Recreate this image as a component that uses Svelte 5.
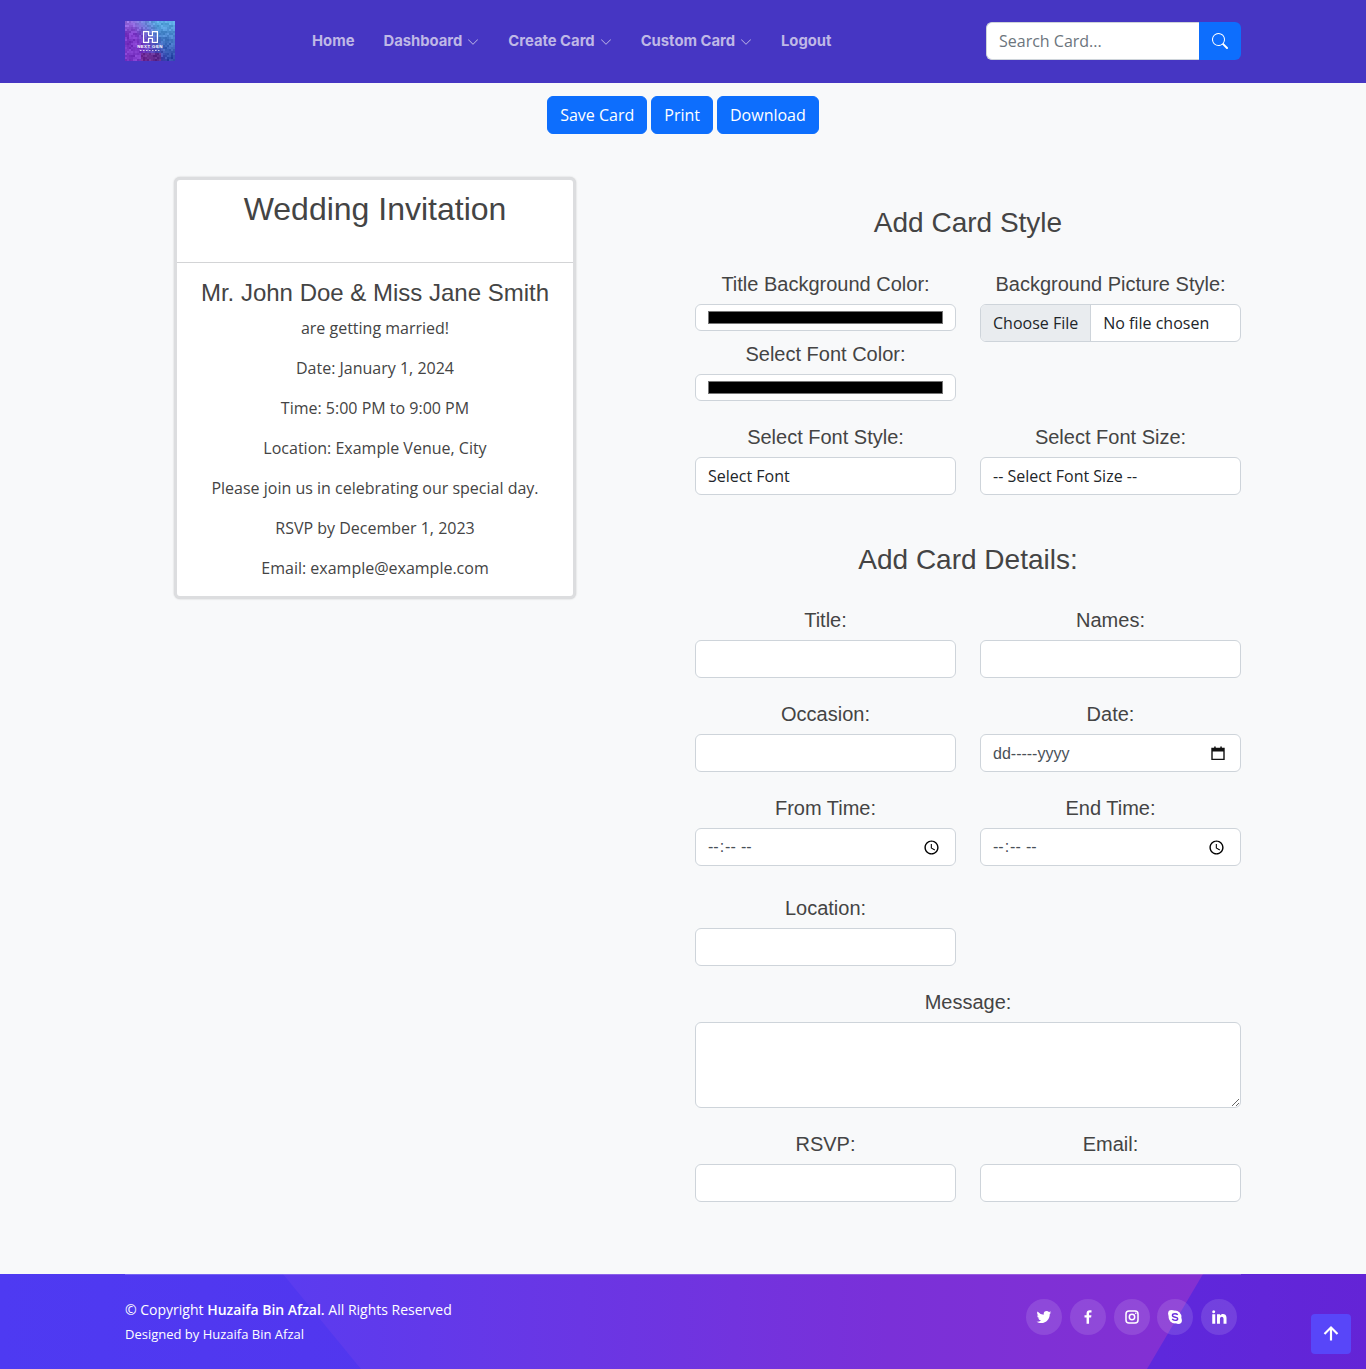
<script>
  const navLinks = [
    { label: 'Home', drop: false },
    { label: 'Dashboard', drop: true },
    { label: 'Create Card', drop: true },
    { label: 'Custom Card', drop: true },
    { label: 'Logout', drop: false }
  ];

  const cardLines = [
    'are getting married!',
    'Date: January 1, 2024',
    'Time: 5:00 PM to 9:00 PM',
    'Location: Example Venue, City',
    'Please join us in celebrating our special day.',
    'RSVP by December 1, 2023',
    'Email: example@example.com'
  ];

  // the logo is a low-res photo in the reference, so build it from 2px cells
  function mix(a, b, t) {
    return a.map((v, i) => v + (b[i] - v) * t);
  }

  function logoColor(x, y) {
    const u = x / 24;
    const v = y / 19;
    const left = mix([150, 110, 225], [125, 55, 200], Math.min(v * 3, 1));
    const right = mix([90, 170, 225], [45, 70, 170], v);
    const edge = u * 1.9 - 0.45 + (0.5 - v) * 0.5;
    let c = mix(left, right, Math.min(1, Math.max(0, edge)));
    if (v > 0.82 && u > 0.3 && u < 0.72) c = mix(c, [105, 35, 125], 0.65);
    const hash = Math.abs(Math.sin(x * 12.9898 + y * 78.233) * 43758.5453) % 1;
    const noise = (hash - 0.5) * 36;
    return `rgb(${c.map((n) => Math.round(n + noise)).join(',')})`;
  }

  const logoCells = [];
  for (let y = 0; y < 20; y++) {
    for (let x = 0; x < 25; x++) {
      logoCells.push({ x: x * 2, y: y * 2, fill: logoColor(x, y) });
    }
  }
</script>

<header class="topbar">
  <div class="container bar">
    <svg class="logo" width="50" height="40" viewBox="0 0 50 40">
      {#each logoCells as c}
        <rect x={c.x} y={c.y} width="2" height="2" fill={c.fill} />
      {/each}
      <path d="M18.600 10.600h5v4h3.800v-4h5v10.800h-5v-4h-3.800v4h-5z" fill="none" stroke="#fff" stroke-width="1.200" />
      <text x="25" y="27" class="logo-text">NEXT GEN</text>
      <path d="M15 29.500h20" stroke="#fff" stroke-opacity="0.7" stroke-dasharray="1.500 1.500" />
    </svg>

    <nav class="links">
      {#each navLinks as link}
        <span class="link">
          {link.label}
          {#if link.drop}
            <svg width="12" height="12" viewBox="0 0 16 16" fill="currentColor">
              <path d="M1.646 4.646a.5.5 0 0 1 .708 0L8 10.293l5.646-5.647a.5.5 0 0 1 .708.708l-6 6a.5.5 0 0 1-.708 0l-6-6a.5.5 0 0 1 0-.708z" />
            </svg>
          {/if}
        </span>
      {/each}
    </nav>

    <form class="search">
      <input type="text" placeholder="Search Card..." />
      <button type="button" aria-label="Search">
        <svg width="16" height="16" viewBox="0 0 16 16" fill="currentColor">
          <path d="M11.742 10.344a6.5 6.5 0 1 0-1.397 1.398h-.001c.03.04.062.078.098.115l3.85 3.85a1 1 0 0 0 1.415-1.414l-3.85-3.85a1.007 1.007 0 0 0-.115-.1zM12 6.5a5.5 5.5 0 1 1-11 0 5.5 5.5 0 0 1 11 0z" />
        </svg>
      </button>
    </form>
  </div>
</header>

<div class="actions">
  <button class="btn">Save Card</button>
  <button class="btn">Print</button>
  <button class="btn">Download</button>
</div>

<main class="container content">
  <section class="invite">
    <div class="invite-head">
      <h2>Wedding Invitation</h2>
    </div>
    <div class="invite-body">
      <h4>Mr. John Doe &amp; Miss Jane Smith</h4>
      {#each cardLines as line}
        <p>{line}</p>
      {/each}
    </div>
  </section>

  <section class="editor">
    <h3 class="style-title">Add Card Style</h3>
    <div class="grid">
      <div>
        <div class="field tight">
          <label for="bgc">Title Background Color:</label>
          <input id="bgc" class="control color" type="color" value="#000000" />
        </div>
        <div class="field">
          <label for="fc">Select Font Color:</label>
          <input id="fc" class="control color" type="color" value="#000000" />
        </div>
      </div>
      <div class="field">
        <label for="pic">Background Picture Style:</label>
        <input id="pic" class="control file" type="file" />
      </div>
      <div class="field">
        <label for="ff">Select Font Style:</label>
        <select id="ff" class="control"><option>Select Font</option></select>
      </div>
      <div class="field">
        <label for="fs">Select Font Size:</label>
        <select id="fs" class="control"><option>-- Select Font Size --</option></select>
      </div>
    </div>

    <h3 class="details-title">Add Card Details:</h3>
    <div class="grid">
      <div class="field">
        <label for="title">Title:</label>
        <input id="title" class="control" type="text" />
      </div>
      <div class="field">
        <label for="names">Names:</label>
        <input id="names" class="control" type="text" />
      </div>
      <div class="field">
        <label for="occ">Occasion:</label>
        <input id="occ" class="control" type="text" />
      </div>
      <div class="field">
        <label for="date">Date:</label>
        <div class="with-icon">
          <input id="date" class="control date" type="text" value="dd-----yyyy" />
          <svg class="picker" width="14" height="14" viewBox="0 0 14 14">
            <path d="M1 2.500h12v11H1z" fill="none" stroke="#111" stroke-width="1.400" />
            <path d="M1 2h12v3.400H1zM3.200.6h1.500V3H3.200zM9.300.6h1.500V3H9.300z" fill="#111" />
          </svg>
        </div>
      </div>
      <div class="field">
        <label for="from">From Time:</label>
        <input id="from" class="control time" type="time" />
      </div>
      <div class="field">
        <label for="end">End Time:</label>
        <input id="end" class="control time" type="time" />
      </div>
      <div class="field location">
        <label for="loc">Location:</label>
        <input id="loc" class="control" type="text" />
      </div>
      <div class="field wide">
        <label for="msg">Message:</label>
        <textarea id="msg" class="control"></textarea>
      </div>
      <div class="field">
        <label for="rsvp">RSVP:</label>
        <input id="rsvp" class="control" type="text" />
      </div>
      <div class="field">
        <label for="email">Email:</label>
        <input id="email" class="control" type="text" />
      </div>
    </div>
  </section>
</main>

<footer class="footer">
  <div class="band"></div>
  <div class="container foot-row">
    <div class="credits">
      <div class="copy">© Copyright <strong>Huzaifa Bin Afzal.</strong> All Rights Reserved</div>
      <div class="made">Designed by Huzaifa Bin Afzal</div>
    </div>
    <div class="socials">
      <span class="social">
        <svg width="18" height="18" viewBox="0 0 24 24" fill="#fff"><path d="M19.633 7.997c.013.175.013.349.013.523 0 5.325-4.053 11.461-11.46 11.461-2.282 0-4.402-.661-6.186-1.809.324.037.636.05.973.05a8.07 8.07 0 0 0 5.001-1.721 4.036 4.036 0 0 1-3.767-2.793c.249.037.499.062.761.062.361 0 .724-.05 1.061-.137a4.027 4.027 0 0 1-3.23-3.953v-.05c.537.299 1.16.486 1.82.511a4.022 4.022 0 0 1-1.796-3.354c0-.748.199-1.434.548-2.032a11.457 11.457 0 0 0 8.306 4.215c-.062-.3-.1-.611-.1-.923a4.026 4.026 0 0 1 4.028-4.028c1.16 0 2.207.486 2.943 1.272a7.957 7.957 0 0 0 2.556-.973 4.02 4.02 0 0 1-1.771 2.22 8.073 8.073 0 0 0 2.319-.624 8.645 8.645 0 0 1-2.019 2.083z" /></svg>
      </span>
      <span class="social">
        <svg width="18" height="18" viewBox="0 0 24 24" fill="#fff"><path d="M13.397 20.997v-8.196h2.765l.411-3.209h-3.176V7.548c0-.926.258-1.56 1.587-1.56h1.684V3.127A22.336 22.336 0 0 0 14.201 3c-2.444 0-4.122 1.492-4.122 4.231v2.355H7.332v3.209h2.753v8.202h3.312z" /></svg>
      </span>
      <span class="social">
        <svg width="18" height="18" viewBox="0 0 24 24" fill="none" stroke="#fff" stroke-width="2">
          <rect x="4" y="4" width="16" height="16" rx="4" />
          <circle cx="12" cy="12" r="3.600" />
          <circle cx="17" cy="7" r="1.100" fill="#fff" stroke="none" />
        </svg>
      </span>
      <span class="social">
        <svg width="18" height="18" viewBox="0 0 24 24">
          <circle cx="12" cy="12" r="8.600" fill="#fff" />
          <circle cx="7.400" cy="7.400" r="4.600" fill="#fff" />
          <circle cx="16.600" cy="16.600" r="4.600" fill="#fff" />
          <path d="M15.600 9.200c-.7-1-2-1.500-3.600-1.500-2 0-3.400 1-3.400 2.300 0 3.200 7 1.600 7 4.300 0 1.300-1.500 2.200-3.500 2.200-1.800 0-3.100-.7-3.800-1.900" fill="none" stroke="#6a2fdc" stroke-width="1.900" />
        </svg>
      </span>
      <span class="social">
        <svg width="18" height="18" viewBox="0 0 24 24" fill="#fff"><path d="M6.94 5a2 2 0 1 1-4-.002 2 2 0 0 1 4 .002zM7 8.48H3V21h4V8.48zm6.32 0H9.34V21h3.940v-6.57c0-3.660 4.770-4 4.770 0V21H22v-7.930c0-6.170-7.060-5.940-8.720-2.910l.04-1.680z" /></svg>
      </span>
    </div>
  </div>
  <button class="to-top" aria-label="Back to top">
    <svg width="26" height="26" viewBox="0 0 24 24" fill="#fff"><path d="M11 8.414V18h2V8.414l4.293 4.293 1.414-1.414L12 4.586l-6.707 6.707 1.414 1.414z" /></svg>
  </button>
</footer>

<style>
  :global(body) {
    margin: 0;
    background: #f8f9fa;
    color: #444;
    font-family: 'Open Sans', sans-serif;
    font-size: 16px;
    line-height: 1.5;
  }

  .container {
    width: 1116px;
    margin: 0 auto;
  }

  .topbar {
    height: 83px;
    background: #4636c3;
  }

  .bar {
    display: flex;
    align-items: center;
    height: 82px;
  }

  .logo {
    display: block;
    flex: none;
  }

  .logo-text {
    font-family: 'Liberation Sans', sans-serif;
    font-size: 4.400px;
    font-weight: 700;
    letter-spacing: 0.4px;
    fill: #fff;
    text-anchor: middle;
  }

  .links {
    display: flex;
    gap: 29px;
    margin-left: 137px;
    padding-top: 1px;
    flex: 1;
  }

  .link {
    display: flex;
    align-items: center;
    gap: 5px;
    color: #bfb8e6;
    font-family: Inter, sans-serif;
    font-size: 14.800px;
    font-weight: 700;
  }

  .search {
    display: flex;
    width: 255px;
    height: 38px;
  }

  .search input {
    flex: 1;
    min-width: 0;
    box-sizing: border-box;
    border: 1px solid #ced4da;
    border-right: 0;
    border-radius: 6px 0 0 6px;
    padding: 6px 12px;
    font: inherit;
    outline: none;
  }

  .search input::placeholder {
    color: #6c757d;
  }

  .search button {
    display: flex;
    align-items: center;
    justify-content: center;
    width: 42px;
    border: 0;
    padding: 0;
    border-radius: 0 6px 6px 0;
    background: #0d6efd;
    color: #fff;
  }

  .actions {
    display: flex;
    justify-content: center;
    gap: 4px;
    padding-top: 13px;
  }

  .btn {
    height: 38px;
    padding: 6px 12px;
    border: 1px solid #0d6efd;
    border-radius: 6px;
    background: #0d6efd;
    color: #fff;
    font: inherit;
  }

  .content {
    display: flex;
    align-items: flex-start;
    padding-top: 43px;
    height: 1140px;
    box-sizing: border-box;
  }

  .invite {
    width: 402px;
    box-sizing: border-box;
    margin-left: 49px;
    border: 3px solid #dcdddf;
    border-radius: 6px;
    background: #fff;
    box-shadow: 0 0 2px rgba(0, 0, 0, 0.2);
    text-align: center;
  }

  .invite-head {
    box-sizing: border-box;
    height: 83px;
    border-bottom: 1px solid #d3d4d6;
    padding: 10px 16px 0;
  }

  h2, h3, h4 {
    margin: 0;
    font-family: 'Liberation Sans', sans-serif;
    font-weight: 400;
    line-height: 1.2;
    color: #444;
  }

  h2 {
    font-size: 32px;
  }

  .invite-body {
    padding: 16px 16px 0;
  }

  h4 {
    font-size: 24px;
    margin-bottom: 8px;
    white-space: nowrap;
  }

  .invite-body p {
    margin: 0 0 16px;
  }

  .editor {
    width: 546px;
    margin-left: 119px;
  }

  h3 {
    font-size: 28px;
    text-align: center;
  }

  .style-title {
    margin-top: 29px;
    margin-bottom: 29px;
  }

  .details-title {
    margin-top: 27px;
    margin-bottom: 29px;
  }

  .grid {
    display: grid;
    grid-template-columns: 261px 261px;
    column-gap: 24px;
    align-items: start;
  }

  .field {
    margin-bottom: 21px;
    text-align: center;
  }

  .field.tight {
    margin-bottom: 8px;
  }

  .field.location {
    margin-top: 6px;
    grid-column: 1;
  }

  .field.wide {
    grid-column: 1 / 3;
  }

  .field.wide + .field {
    grid-column: 1;
  }

  label {
    display: block;
    height: 30px;
    margin-bottom: 5px;
    font-family: 'Liberation Sans', sans-serif;
    font-size: 20px;
    line-height: 30px;
    color: #444;
  }

  .control {
    display: block;
    width: 100%;
    height: 38px;
    box-sizing: border-box;
    margin: 0;
    padding: 6px 12px;
    border: 1px solid #ced4da;
    border-radius: 6px;
    background: #fff;
    color: #212529;
    font-family: 'Open Sans', sans-serif;
    font-size: 16px;
    line-height: 1.5;
    outline: none;
    appearance: none;
  }

  textarea.control {
    height: 86px;
    resize: vertical;
    appearance: auto;
  }

  .color {
    height: 27px;
    padding: 6px 12px;
  }

  .color::-webkit-color-swatch-wrapper {
    padding: 0;
  }

  .color::-webkit-color-swatch {
    border: 1px solid #767676;
    border-radius: 0;
  }

  .file {
    overflow: hidden;
  }

  .file::file-selector-button {
    height: 38px;
    margin: -7px 12.500px -5px -12px;
    padding: 6px 11.500px 6px 12px;
    border: 0;
    border-right: 1px solid #ced4da;
    border-radius: 0;
    background: #e9ecef;
    color: #212529;
    font: inherit;
  }

  .with-icon {
    position: relative;
  }

  .date {
    padding-top: 7px;
    padding-bottom: 5px;
    font-family: 'Liberation Sans', sans-serif;
    color: #495057;
  }

  .time {
    font-family: 'Liberation Sans', sans-serif;
    color: #495057;
  }

  .time::-webkit-datetime-edit {
    margin-left: -1px;
  }

  .picker {
    position: absolute;
    top: 12px;
    right: 16px;
  }

  .footer {
    position: relative;
    height: 95px;
    overflow: hidden;
    background: linear-gradient(90deg, #4e3af2 0%, #5236ee 30%, #5e28dc 85%, #6424d6 100%);
    color: #fff;
  }

  .band {
    position: absolute;
    inset: 0;
    background: linear-gradient(90deg, #5a3cf0 20%, #7a30d8 65%, #8430d2 88%);
    clip-path: polygon(283px 0, 1203px 0, 1147px 100%, 361px 100%);
  }

  .foot-row {
    position: relative;
    display: flex;
    justify-content: space-between;
    height: 100%;
    box-sizing: border-box;
    border-top: 1px solid rgba(255, 255, 255, 0.22);
    padding: 24px 4px 0 0;
  }

  .copy {
    font-size: 14px;
    line-height: 21px;
  }

  .copy strong {
    font-weight: 600;
  }

  .made {
    margin-top: 5px;
    font-size: 13px;
    line-height: 19px;
  }

  .socials {
    display: flex;
    gap: 7.750px;
    height: 36px;
  }

  .social {
    display: flex;
    align-items: center;
    justify-content: center;
    width: 36px;
    height: 36px;
    border-radius: 50%;
    background: rgba(255, 255, 255, 0.12);
  }

  .to-top {
    position: absolute;
    top: 40px;
    right: 15px;
    display: flex;
    align-items: center;
    justify-content: center;
    width: 40px;
    height: 40px;
    padding: 0;
    border: 0;
    border-radius: 4px;
    background: #5846f9;
  }
</style>
